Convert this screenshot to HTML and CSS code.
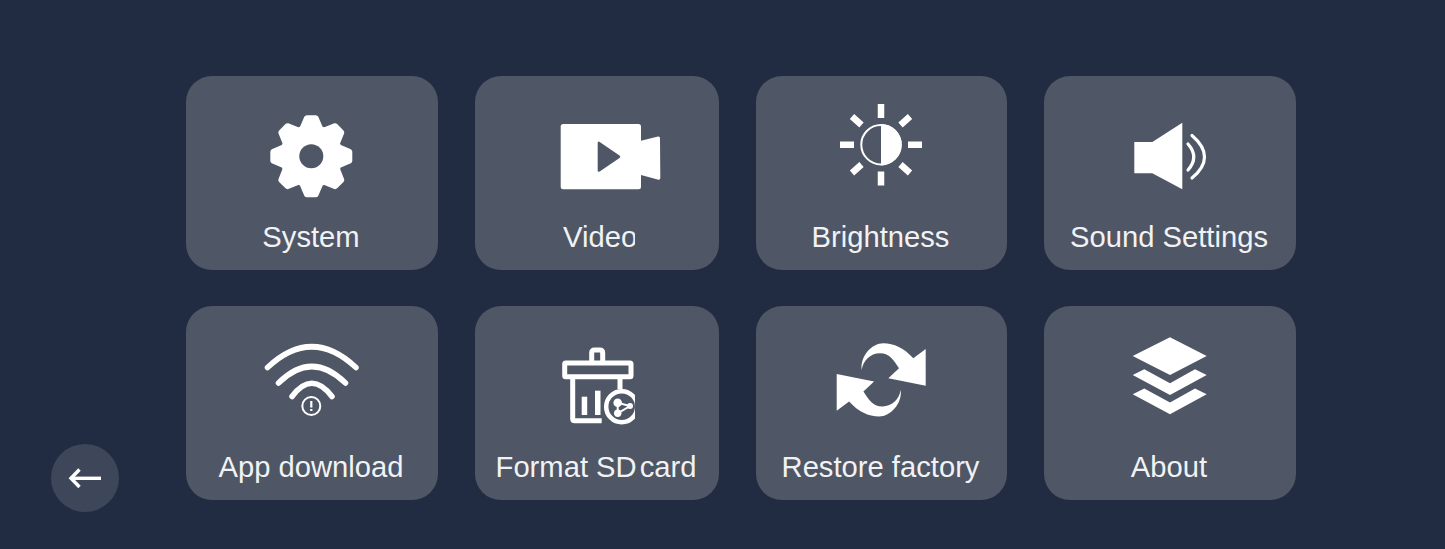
FILE: index.html
```html
<!DOCTYPE html>
<html lang="en">
<head>
  <meta charset="UTF-8">
  <title>Settings</title>
  <link rel="stylesheet" href="styles.css">
</head>
<body>
  <div class="page">
    <button class="back-button" title="Back">
      <svg width="68" height="68" viewBox="0 0 68 68" fill="none" stroke="#fff" stroke-width="3.4">
        <path d="M20 34.3H50"/>
        <path d="M28.5 25.5L20 34.3L28.5 43"/>
      </svg>
    </button>

    <div class="menu-grid">
      <div class="menu-card">
        <svg class="icon" viewBox="0 0 120 120" fill="#fff">
          <defs>
            <path id="tooth" d="M-11.500-29L-7-39.500Q-6-41-4.500-41H4.500Q6-41 7-39.500L11.500-29Z"/>
          </defs>
          <g transform="translate(59.300 60.200)">
            <circle r="31.500"/>
            <use href="#tooth"/>
            <use href="#tooth" transform="rotate(45)"/>
            <use href="#tooth" transform="rotate(90)"/>
            <use href="#tooth" transform="rotate(135)"/>
            <use href="#tooth" transform="rotate(180)"/>
            <use href="#tooth" transform="rotate(225)"/>
            <use href="#tooth" transform="rotate(270)"/>
            <use href="#tooth" transform="rotate(315)"/>
            <circle class="cut" r="12"/>
          </g>
        </svg>
        <div class="label">System</div>
      </div>

      <div class="menu-card">
        <svg class="icon" viewBox="0 0 120 120" fill="#fff">
          <rect x="23.700" y="28" width="80.300" height="65.300" rx="2.500"/>
          <path d="M104 44.700L121 40.500Q123 40.200 123 42L123.300 82Q123.300 84 121.500 83.700L104 79Z"/>
          <path class="cut" d="M60.700 47Q60.700 44.700 62.700 46L82.500 59.500Q84 60.700 82.500 62L62.700 75.500Q60.700 76.500 60.700 74.500Z"/>
        </svg>
        <div class="label"><span class="cut-text">Video</span></div>
      </div>

      <div class="menu-card">
        <svg class="icon" viewBox="0 0 120 120" fill="#fff">
          <circle cx="59" cy="48.700" r="19.700" fill="none" stroke="#fff" stroke-width="2"/>
          <path d="M59 28A20.700 20.700 0 0 1 59 69.400Z"/>
          <g stroke="#fff" stroke-width="6.500">
            <path d="M59 8V22M59 75.500V89.500M18 48.700H32M86 48.700H100"/>
            <path d="M39.500 29L30 20.500M78.500 29L88 20.500M39.500 68.500L30 77M78.500 68.500L88 77"/>
          </g>
        </svg>
        <div class="label">Brightness</div>
      </div>

      <div class="menu-card">
        <svg class="icon" viewBox="0 0 120 120" fill="#fff">
          <path d="M24.300 46H42.300L72.300 26.700V93.300L42.300 77.300H24.300Z"/>
          <g fill="none" stroke="#fff" stroke-width="3.200" stroke-linecap="round">
            <path d="M78 48Q89.500 61 78 74"/>
            <path d="M82 39.500Q107 61 82 82"/>
          </g>
        </svg>
        <div class="label">Sound Settings</div>
      </div>

      <div class="menu-card">
        <svg class="icon" viewBox="0 0 120 120" fill="none" stroke="#fff">
          <g stroke-width="5.500" stroke-linecap="round">
            <path d="M15.500 41.500Q59.700 0 104 41.500"/>
            <path d="M26.500 57Q59.700 24 93.500 57"/>
            <path d="M40 70.500Q59.700 44 80 70.500"/>
          </g>
          <circle cx="59.300" cy="80" r="9" stroke-width="2"/>
          <path d="M59.300 75V81.500M59.300 83V85" stroke-width="2.200"/>
        </svg>
        <div class="label">App download</div>
      </div>

      <div class="menu-card">
        <svg class="icon" viewBox="0 0 120 120" fill="none" stroke="#fff" stroke-width="5">
          <defs>
            <clipPath id="trashClip"><rect x="0" y="0" width="98" height="120"/></clipPath>
          </defs>
          <g clip-path="url(#trashClip)">
            <rect x="27.700" y="37" width="66.300" height="13.700" rx="1"/>
            <path d="M54.700 37V27Q54.700 24 57.700 24H62.700Q65.700 24 65.700 27V37"/>
            <path d="M35.700 51V92.700Q35.700 94.700 37.700 94.700H64.700"/>
            <path d="M83 51V63"/>
            <circle cx="84.700" cy="80.700" r="15.500" stroke-width="4.500"/>
            <path d="M80.700 76.700L93 80L80.700 87.300Z" stroke-width="2"/>
            <circle cx="80.700" cy="76.700" r="4.300" fill="#fff" stroke="none"/>
            <circle cx="80.700" cy="87.300" r="3.700" fill="#fff" stroke="none"/>
            <circle cx="93" cy="80" r="3" fill="#fff" stroke="none"/>
            <g fill="#fff" stroke="none">
              <rect x="44.700" y="70.700" width="5.500" height="18.300"/>
              <rect x="58" y="64.700" width="5.500" height="24.300"/>
            </g>
          </g>
        </svg>
        <div class="label"><span>Format SD</span><span class="split-text">card</span></div>
      </div>

      <div class="menu-card">
        <svg class="icon" viewBox="0 0 120 120" fill="#fff">
          <g>
            <path id="restoreArrow" d="M39.700 44C38 30 50 17.300 61.300 17.300C72 17.300 82 22 91.300 32.300L103.700 23V59.700L66.300 52.300L77 42.300C72 35 68 27.300 58 27.300C48 27.300 41 35 39.700 44Z"/>
            <use href="#restoreArrow" transform="rotate(180 59.200 53.850)"/>
          </g>
        </svg>
        <div class="label">Restore factory</div>
      </div>

      <div class="menu-card">
        <svg class="icon" viewBox="0 0 120 120" fill="#fff">
          <path d="M60 11.300L96.700 30L60 49L22.700 30Z"/>
          <path id="layerChevron" d="M22.700 49L34.300 43.300L60 57.300L85 43.300L96.700 49L60 69Z"/>
          <use href="#layerChevron" transform="translate(0 19.300)"/>
        </svg>
        <div class="label">About</div>
      </div>
    </div>
  </div>
</body>
</html>
```

FILE: styles.css
```css
* {
  box-sizing: border-box;
}

body {
  margin: 0;
  background: #212c42;
  font-family: "Liberation Sans", Arial, sans-serif;
  overflow: hidden;
}

.page {
  display: flex;
  height: 549px;
  padding: 76px 0 37px 51px;
}

.back-button {
  align-self: flex-end;
  width: 68px;
  height: 68px;
  padding: 0;
  margin-right: 67px;
  background: #3e475a;
  border: none;
  border-radius: 50%;
  cursor: pointer;
}

.back-button svg {
  display: block;
}

.menu-grid {
  display: grid;
  grid-template-columns: 252px 244px 251px 252px;
  grid-template-rows: 194px 194px;
  column-gap: 37px;
  row-gap: 36px;
  align-self: flex-start;
}

.menu-card {
  display: flex;
  flex-direction: column;
  align-items: center;
  padding-top: 20px;
  background: #4f5665;
  border-radius: 26px;
}

.icon {
  display: block;
  flex: none;
  width: 120px;
  height: 120px;
  overflow: visible;
}

.cut {
  fill: #4f5665;
}

.label {
  display: flex;
  justify-content: center;
  margin-top: 4px;
  margin-right: 2px;
  color: #f1f2f4;
  font-size: 29.2px;
  line-height: 34px;
  white-space: nowrap;
}

.cut-text {
  display: block;
  width: 72px;
  margin-left: 6px;
  overflow: hidden;
}

.split-text {
  margin-left: 3px;
}
```
